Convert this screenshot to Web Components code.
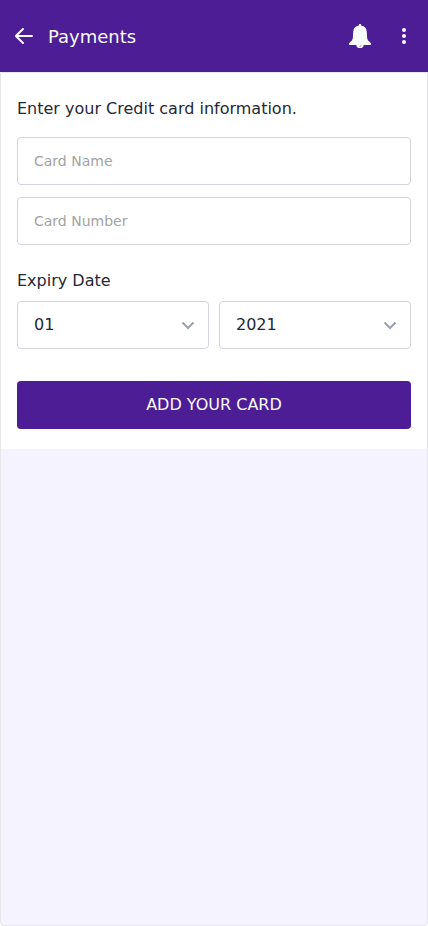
<!DOCTYPE html>
<html lang="en"><head><meta charset="utf-8"><title>Payments</title>
<style>html,body{margin:0;height:100%}body{font:16px/24px "DejaVu Sans",sans-serif;color:#1f2937;background:#fff}</style></head>
<body>
<payment-screen>
<app-header slot="header">Payments</app-header>
<card-form></card-form>
</payment-screen>
<script>
const define=(name,html)=>customElements.define(name,class extends HTMLElement{
 constructor(){super();const t=document.createElement('template');t.innerHTML=html;
 this.attachShadow({mode:'open'}).append(t.content.cloneNode(true));
 const p=this.getAttribute('placeholder');if(p)this.shadowRoot.querySelector('input').placeholder=p;}});
define('payment-screen',`<style>:host{display:flex;flex-direction:column;height:100vh}
main{flex:1;box-sizing:border-box;border:1px solid #e5e7eb;border-radius:0 0 4px 4px;background:#f5f3ff}</style>
<slot name="header"></slot><main><slot></slot></main>`);
define('app-header',`<style>:host{display:flex;align-items:center;height:72px;box-sizing:border-box;padding:0 12px;background:#4c1d95;color:#f9fafb;font-size:18px;line-height:28px}
svg{display:block;fill:currentColor}.title{flex:1;margin-left:12px;padding-top:1px}.more{margin-left:20px}</style>
<svg width="24" height="24" viewBox="0 0 24 24"><path d="M10.295 19.716a1 1 0 0 0 1.404-1.425l-5.37-5.29h13.67a1 1 0 1 0 0-2H6.336L11.7 5.714a1 1 0 0 0-1.404-1.424l-6.924 6.822a1.25 1.25 0 0 0 0 1.78l6.924 6.823z"/></svg>
<span class="title"><slot></slot></span>
<svg width="24" height="26" viewBox="0 0 24 26"><path d="M12 1c.7 0 1.2.5 1.2 1.200v.4c3.600.5 5.400 3 5.600 6.400l.3 5.200c.1 2.100 1 3.500 2.600 4.900l1 .9c.600.6.4 1.900-.5 1.900h-6.500c-.2 2.100-1.800 3.200-3.700 3.200s-3.500-1.100-3.700-3.200H1.800c-.9 0-1.100-1.300-.5-1.900l1-.9c1.600-1.400 2.500-2.800 2.600-4.900l.3-5.200c.2-3.400 2-5.900 5.600-6.400v-.4c0-.7.5-1.200 1.200-1.200z"/><path d="M11.800 24a1.300 1.300 0 0 1 1.600-1.300" fill="none" stroke="#4c1d95" stroke-width=".45"/></svg>
<svg class="more" width="24" height="24" viewBox="0 0 24 24"><circle cx="12" cy="6" r="2"/><circle cx="12" cy="12" r="2"/><circle cx="12" cy="18" r="2"/></svg>`);
define('text-field',`<style>:host{display:block;height:48px}
input{display:block;box-sizing:border-box;width:100%;height:48px;margin:0;padding:0 16px;border:1px solid #d1d5db;border-radius:4px;background:#fff;color:inherit;font:14px "DejaVu Sans",sans-serif}
input::placeholder{color:#a3a3a3;opacity:1}</style><input>`);
define('select-box',`<style>:host{display:flex;align-items:center;justify-content:space-between;box-sizing:border-box;height:48px;padding:0 8px 0 16px;border:1px solid #d1d5db;border-radius:4px;background:#fff}
svg{display:block}</style><span><slot></slot></span>
<svg width="24" height="24" viewBox="0 0 24 24" fill="none" stroke="#9ca3af" stroke-width="2"><path d="M6.500 9.500l5.500 5.500 5.500-5.500"/></svg>`);
define('submit-button',`<style>:host{display:block}button{display:block;width:100%;height:48px;border:0;border-radius:4px;background:#4c1d95;color:#f9fafb;font:16px/24px "DejaVu Sans",sans-serif;padding:0}</style><button><slot></slot></button>`);
define('card-form',`<style>:host{display:block;box-sizing:border-box;height:376px;padding:24px 16px 20px;background:#fff}
h1,h2{margin:0;font-size:16px;font-weight:400;line-height:24px}.fields{display:grid;gap:12px;margin:16px 0 24px}
.dates{display:grid;grid-template-columns:1fr 1fr;gap:10px;margin:8px 0 32px}</style>
<h1>Enter your Credit card information.</h1>
<div class="fields"><text-field placeholder="Card Name"></text-field><text-field placeholder="Card Number"></text-field></div>
<h2>Expiry Date</h2><div class="dates"><select-box>01</select-box><select-box>2021</select-box></div>
<submit-button>ADD YOUR CARD</submit-button>`);
</script></body></html>
